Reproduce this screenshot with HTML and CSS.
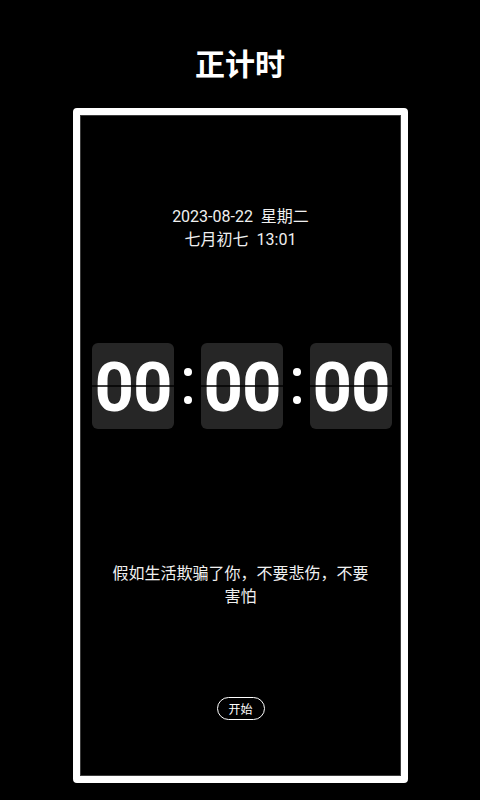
FILE: index.html
```html
<!DOCTYPE html>
<html lang="zh">
<head>
<meta charset="utf-8">
<title>正计时</title>
<link rel="stylesheet" href="styles.css">
</head>
<body>
<div class="page">
  <header class="title">正计时</header>
  <div class="frame">
    <div class="inner">
      <div class="date">
        <div>2023-08-22&nbsp;&nbsp;星期二</div>
        <div>七月初七&nbsp;&nbsp;13:01</div>
      </div>
      <div class="clock">
        <div class="card"><span>00</span><i class="split"></i></div>
        <div class="colon"><b></b><b></b></div>
        <div class="card"><span>00</span><i class="split"></i></div>
        <div class="colon"><b></b><b></b></div>
        <div class="card"><span>00</span><i class="split"></i></div>
      </div>
      <div class="quote">假如生活欺骗了你，不要悲伤，不要害怕</div>
      <button class="start">开始</button>
    </div>
  </div>
</div>
</body>
</html>
```
FILE: styles.css
```css
html, body {
  margin: 0;
  padding: 0;
  background: #000;
}
body {
  font-family: "Roboto", "Noto Sans CJK SC", sans-serif;
  color: #fff;
}
.page {
  width: 480px;
  height: 800px;
  display: flex;
  flex-direction: column;
  align-items: center;
}
.title {
  height: 108px;
  display: flex;
  align-items: center;
  justify-content: center;
  font-family: "Noto Sans CJK SC", sans-serif;
  font-weight: 700;
  font-size: 30px;
  padding-top: 16px;
  box-sizing: border-box;
}
.frame {
  width: 335px;
  height: 675px;
  margin-left: 1px;
  box-sizing: border-box;
  border: 7px solid #fff;
  border-radius: 4px;
}
.inner {
  height: 100%;
  box-sizing: border-box;
  border: 1px solid #3c3c3c;
  display: flex;
  flex-direction: column;
  align-items: center;
}
.date {
  margin-top: 89px;
  font-size: 16px;
  line-height: 23px;
  text-align: center;
  color: #f0f0f0;
}
.clock {
  margin-top: 92px;
  display: flex;
  margin-left: 3px;
}
.card {
  position: relative;
  width: 82px;
  height: 86px;
  background: #262626;
  border-radius: 6px;
  display: flex;
  align-items: center;
  justify-content: center;
  font-family: "Roboto", sans-serif;
  font-weight: 700;
  font-size: 69px;
  line-height: 1;
  letter-spacing: -1px;
}
.card span {
  position: relative;
  top: 1px;
}
.split {
  position: absolute;
  left: 0;
  right: 0;
  top: 42px;
  height: 2px;
  background: rgba(0, 0, 0, 0.75);
}
.colon {
  width: 27px;
  display: flex;
  flex-direction: column;
  align-items: center;
  justify-content: center;
  gap: 20px;
}
.colon b {
  width: 8px;
  height: 8px;
  border-radius: 50%;
  background: #fff;
}
.quote {
  margin-top: 132px;
  width: 262px;
  font-family: "Noto Sans CJK SC", sans-serif;
  font-size: 16px;
  line-height: 23px;
  text-align: center;
  color: #f0f0f0;
}
.start {
  margin-top: 90px;
  width: 48px;
  height: 23px;
  padding: 0;
  background: transparent;
  border: 1px solid #fff;
  border-radius: 12px;
  color: #fff;
  font-family: "Noto Sans CJK SC", sans-serif;
  font-size: 12px;
  line-height: 20px;
}
```
